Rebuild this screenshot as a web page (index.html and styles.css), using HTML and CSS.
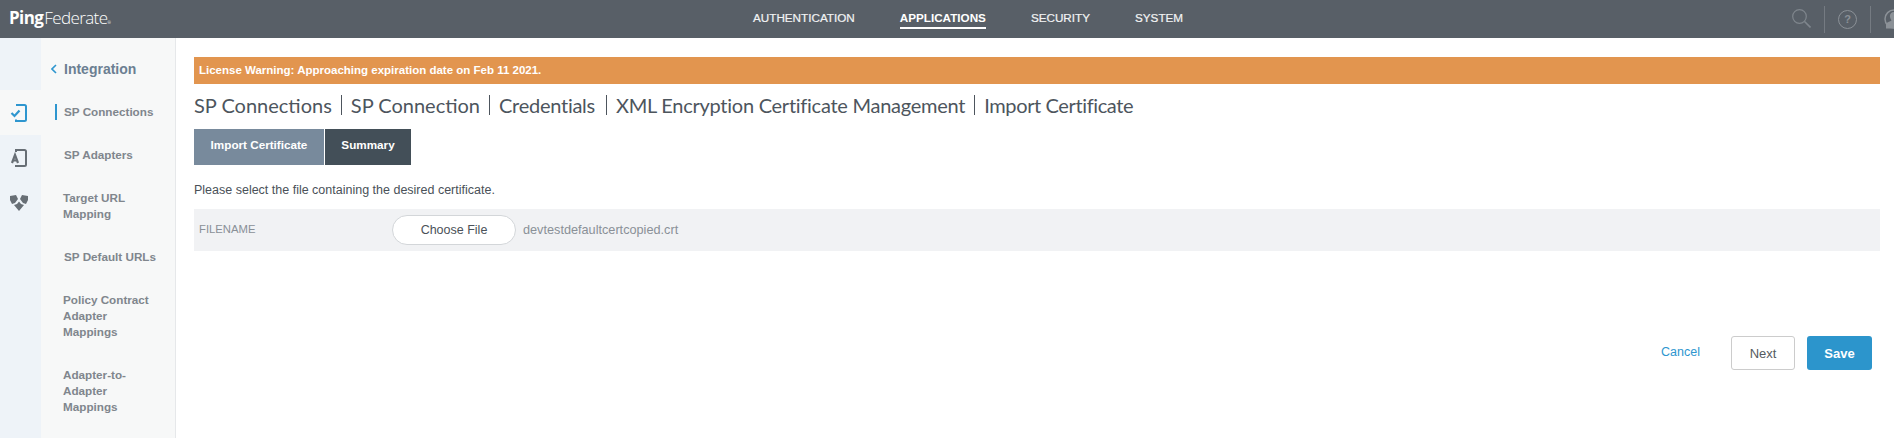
FILE: index.html
```html
<!DOCTYPE html>
<html lang="en">
<head>
<meta charset="utf-8">
<title>PingFederate</title>
<link rel="stylesheet" href="styles.css">
</head>
<body>
<header class="topbar">
  <div class="logo"><span class="logo-ping">Ping</span><span class="logo-fed">Federate</span><sup class="logo-reg">®</sup></div>
  <nav class="topnav">
    <a class="topnav-item">AUTHENTICATION</a>
    <a class="topnav-item is-active">APPLICATIONS</a>
    <a class="topnav-item">SECURITY</a>
    <a class="topnav-item">SYSTEM</a>
  </nav>
  <div class="tools">
    <svg class="tool-search" width="19" height="19" viewBox="0 0 19 19" fill="none" stroke="#7f868d" stroke-width="1.2"><circle cx="7.500" cy="7.500" r="6.800"/><path d="M12.500 12.500l6 6" stroke-width="1.600"/></svg>
    <span class="tool-sep"></span>
    <span class="tool-help">?</span>
    <span class="tool-sep"></span>
    <svg class="tool-user" width="18" height="20" viewBox="0 0 18 20"><circle cx="10" cy="10" r="9" fill="none" stroke="#8b9197" stroke-width="1.500"/><path d="M10 3c3 0 4.500 2.500 4 5-.3 1.500-1 2.500-1.500 3.500 1.500 1 3.500 1.500 5.500 3v5H2v-5c2-1.500 4-2 5.500-3C7 10.500 6.300 9.500 6 8c-.5-2.500 1-5 4-5z" fill="#8b9197"/></svg>
  </div>
</header>
<div class="shell">
  <aside class="rail">
    <div class="rail-item is-active">
      <svg width="18" height="20" viewBox="0 0 18 20" fill="none" stroke="#2e96cf" stroke-width="2"><path d="M6 2h8.500a1.500 1.500 0 0 1 1.500 1.500v13a1.500 1.500 0 0 1-1.500 1.500H6v-1.500"/><path d="M1.500 10l3 3 5-5.500" stroke-width="2.200"/></svg>
    </div>
    <div class="rail-item">
      <svg width="18" height="20" viewBox="0 0 18 20" fill="none" stroke="#676e75" stroke-width="2"><path d="M6 4V2h8.500A1.500 1.500 0 0 1 16 3.500v13a1.500 1.500 0 0 1-1.500 1.500H6v-1"/><path d="M2 15L5 7l3 8M3 12.500h4" stroke-width="2.200"/></svg>
    </div>
    <div class="rail-item">
      <svg width="20" height="18" viewBox="0 0 20 18" fill="#676e75"><path d="M1 2l6-1 2 4-3 4-3 1-2-4z"/><path d="M19 2l-6-1-2 4 3 4 3 1 2-4z"/><path d="M5 11l3-1 2-2.500L12 10l3 1-5 6z"/></svg>
    </div>
  </aside>
  <nav class="sidenav">
    <div class="sidenav-head"><svg class="chev" width="6" height="10" viewBox="0 0 6 10" fill="none" stroke="#2e96cf" stroke-width="1.600"><path d="M5 1L1 5l4 4"/></svg>Integration</div>
    <a class="sidenav-item is-current">SP Connections</a>
    <a class="sidenav-item">SP Adapters</a>
    <a class="sidenav-item">Target URL<br>Mapping</a>
    <a class="sidenav-item">SP Default URLs</a>
    <a class="sidenav-item">Policy Contract<br>Adapter<br>Mappings</a>
    <a class="sidenav-item">Adapter-to-<br>Adapter<br>Mappings</a>
  </nav>
  <main class="content">
    <div class="banner">License Warning: Approaching expiration date on Feb 11 2021.</div>
    <h1 class="crumbs">
      <span>SP Connections</span><span class="bar"></span><span>SP Connection</span><span class="bar"></span><span class="crumb-tight crumb-pad">Credentials</span><span class="bar"></span><span class="crumb-tight">XML Encryption Certificate Management</span><span class="bar"></span><span class="crumb-last">Import Certificate</span>
    </h1>
    <div class="tabs">
      <div class="tab tab-current">Import Certificate</div>
      <div class="tab tab-next">Summary</div>
    </div>
    <p class="hint">Please select the file containing the desired certificate.</p>
    <div class="file-row">
      <div class="file-label">FILENAME</div>
      <div class="file-btn">Choose File</div>
      <div class="file-name">devtestdefaultcertcopied.crt</div>
    </div>
    <div class="actions">
      <a class="cancel">Cancel</a>
      <button class="btn btn-next">Next</button>
      <button class="btn btn-save">Save</button>
    </div>
  </main>
</div>
</body>
</html>
```
FILE: styles.css
```css
* { box-sizing: border-box; }
html, body { margin: 0; height: 100%; overflow: hidden; background: #fff; }
body { font-family: "Liberation Sans", Arial, sans-serif; }

.topbar {
  height: 38px;
  background: #585f67;
  display: flex;
  align-items: center;
  padding-left: 9px;
}
.logo { color: #fff; display: flex; align-items: baseline; width: 731px; font-family: "Open Sans", sans-serif; letter-spacing: -0.6px; margin-top: -3px; }
.logo-ping { font-size: 17px; font-weight: 700; }
.logo-fed { font-size: 17px; font-weight: 300; margin-left: 1px; }
.logo-reg { font-size: 4px; }
.topnav { display: flex; gap: 45px; margin-left: 13px; }
.topnav-item {
  color: #f2f3f4;
  font: 11.700px/18px "Liberation Sans", sans-serif;
  height: 20px;
  -webkit-text-stroke: .2px #f2f3f4;
}
.topnav-item.is-active { font-weight: 700; color: #fff; border-bottom: 2px solid #fff; -webkit-text-stroke: 0; }
.tools { margin-left: auto; display: flex; align-items: center; overflow: hidden; width: 102px; height: 38px; flex: none; }
.tool-search { margin: -1px 13px 0 0; flex: none; }
.tool-sep { width: 1px; height: 27px; background: #757b82; flex: none; }
.tool-help {
  width: 19px; height: 19px; border-radius: 50%;
  border: 1.500px solid #8b9197; color: #8b9197;
  font: 700 11px/16px "Liberation Sans", sans-serif;
  text-align: center; margin: 0 13px; flex: none;
}
.tool-user { margin-left: 13px; flex: none; }

.shell { display: flex; height: 400px; }
.rail { width: 41px; background: #eef3f8; padding-top: 52px; flex: none; }
.rail-item { height: 45px; display: flex; align-items: center; justify-content: center; padding-right: 3px; }
.rail-item.is-active { background: #f7f8f8; }

.sidenav {
  width: 135px; flex: none;
  background: #f7f8f8;
  border-right: 1px solid #e6e8ea;
  color: #80868d;
  font-size: 11.700px;
  font-weight: 700;
  line-height: 16px;
}
.sidenav-head { font-size: 14px; color: #6c7f92; padding: 23px 0 0 10px; height: 63px; line-height: 17px; }
.chev { margin-right: 7px; }
.sidenav-item { display: block; padding: 0 0 27px 23px; }
.sidenav-item:nth-child(2) { padding-top: 3px; position: relative; }
.sidenav-item:nth-child(2)::before { content: ""; position: absolute; left: 14px; top: 3px; width: 2px; height: 16px; background: #2e96cf; }
.sidenav-item:nth-child(4), .sidenav-item:nth-child(6), .sidenav-item:nth-child(7) { padding-left: 22px; }

.content { flex: 1; padding: 19px 14px 0 18px; min-width: 0; display: flex; flex-direction: column; }
.banner {
  height: 27px; background: #e2954f; color: #fff;
  font-size: 11.500px; font-weight: 700; line-height: 27px; padding-left: 5px;
}
.crumbs {
  margin: 8px 0 0; height: 26px; font: 400 20px/26px Lato, sans-serif;
  color: #4d555d; display: flex; align-items: center;
}
.crumb-tight { letter-spacing: -.26px; }
.crumb-pad { padding-right: 2px; }
.crumb-last { letter-spacing: -.38px; }
.bar { width: 1px; height: 20px; background: #4d555d; margin: 0 9px; }
.tabs { display: flex; gap: 1px; margin-top: 11px; height: 36px; }
.tab { color: #fff; font-size: 11.700px; font-weight: 700; line-height: 31px; text-align: center; }
.tab-current { width: 130px; background: #788a9c; }
.tab-next { width: 86px; background: #434f58; }
.hint { margin: 17px 0 0; height: 16px; font-size: 12.500px; line-height: 16px; color: #4a5158; }
.file-row { margin-top: 11px; height: 42px; background: #f1f2f4; display: flex; align-items: center; padding-left: 5px; }
.file-label { width: 193px; font-size: 11.300px; color: #8a9097; margin-top: -2px; }
.file-btn {
  width: 124px; height: 30px; border: 1px solid #d3d6d9; border-radius: 15px; background: #fff;
  font-size: 12.500px; line-height: 28px; text-align: center; color: #4a5158;
}
.file-name { margin-left: 7px; font-size: 12.700px; color: #8a9097; }
.actions { display: flex; justify-content: flex-end; align-items: center; margin-top: 85px; padding-right: 8px; }
.cancel { color: #2e96cf; font-size: 12.500px; margin-right: 31px; margin-top: -2px; }
.btn { height: 34px; border-radius: 3px; font: 13px "Liberation Sans", sans-serif; padding: 0; }
.btn-next { width: 64px; background: #fff; border: 1px solid #ccc; color: #555b61; margin-right: 12px; }
.btn-save { width: 65px; background: #2c95cc; border: 0; color: #fff; font-weight: 700; }
```
